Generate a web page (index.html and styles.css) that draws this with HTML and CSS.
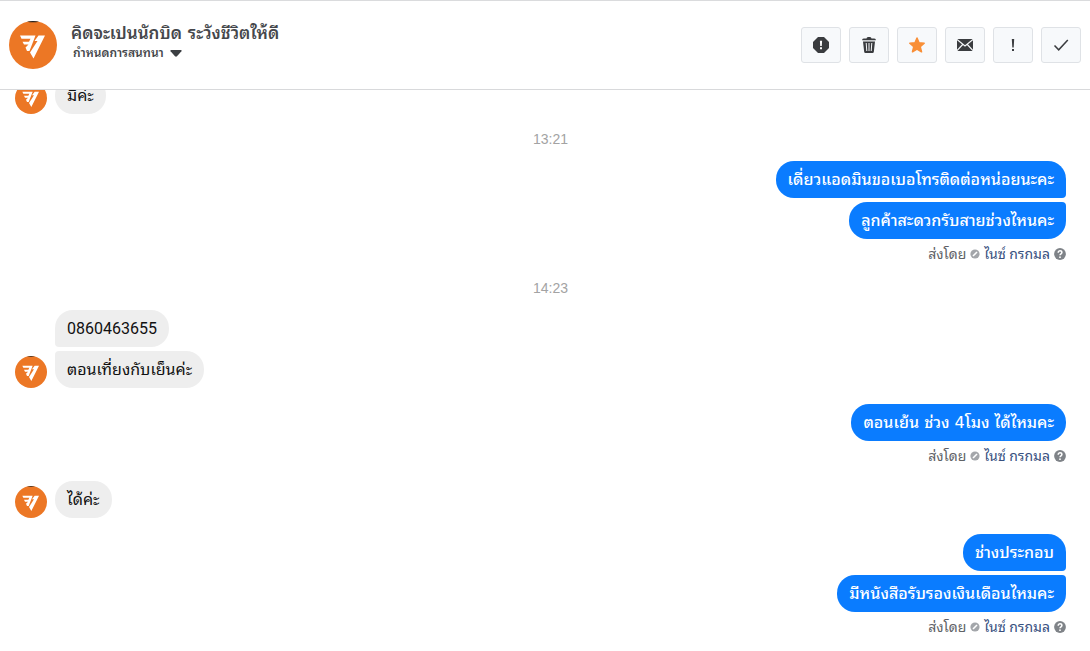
FILE: index.html
```html
<!DOCTYPE html>
<html lang="th">
<head>
<meta charset="utf-8">
<title>คิดจะเปนนักบิด ระวังชีวิตให้ดี</title>
<link rel="stylesheet" href="styles.css">
</head>
<body>
<svg class="defs" aria-hidden="true">
  <symbol id="logo" viewBox="0 0 48 48">
    <circle cx="24" cy="24" r="24" fill="#ec7725"/>
    <path d="M18 .8a24 24 0 0 1 12 0q-6 1-12 0z" fill="#222"/>
    <path fill="#fff" d="M11 14.500h15.500l-6 15.500h-2.500l-1.500-3.500 3-3h-4.500l-1.500-2.700h6.500l1.500-3h-9zM29.500 14.500H36L24.500 37.500 21 31.500l7.500-11.500h-3z"/>
  </symbol>
  <symbol id="pen" viewBox="0 0 10 10">
    <circle cx="5" cy="5" r="4.600" fill="#a3a6aa"/>
    <path d="M3 7l4-4" stroke="#fff" stroke-width="1.600"/>
  </symbol>
  <symbol id="help" viewBox="0 0 12 12">
    <circle cx="6" cy="6" r="5.900" fill="#7f8388"/>
    <path d="M4.200 4.700c0-2.600 3.700-2.400 3.700-.2C7.900 5.800 6 5.800 6 7.300" fill="none" stroke="#fff" stroke-width="1.500"/>
    <circle cx="6" cy="9.200" r=".9" fill="#fff"/>
  </symbol>
</svg>
<div class="app">
  <header class="header">
    <svg class="header-avatar"><use href="#logo"/></svg>
    <div class="heading">
      <h1 class="title">คิดจะเปนนักบิด ระวังชีวิตให้ดี</h1>
      <button class="assign" type="button">กำหนดการสนทนา
        <svg class="caret" viewBox="0 0 12 7"><path d="M1 0h10q1 .3.400 1.200L7 6.300q-1 .9-2 0L.6 1.200Q0 .3 1 0z" fill="#3c3f43"/></svg>
      </button>
    </div>
    <div class="actions">
      <button class="action" type="button" aria-label="สแปม"><svg viewBox="0 0 16 16"><path d="M5 0h6l5 5v6l-5 5H5l-5-5V5z" fill="#3a3c3f"/><path d="M6.900 3.700h2.200l-.3 5.300H7.200zM7 10.200h2v2H7z" fill="#fff"/></svg></button>
      <button class="action" type="button" aria-label="ลบ"><svg viewBox="0 0 16 16"><path d="M1.200 2.500Q1.500 1.500 3 1.500h2.500Q5.700 0 7 0h2q1.300 0 1.500 1.500H13q1.500 0 1.800 1v.8H1.200zM2 4.500h12L12.800 15q-.2 1-1.200 1H4.400q-1 0-1.200-1z" fill="#3a3c3f"/><path d="M5.200 6l.6 8M8 6v8M10.800 6l-.6 8" stroke="#f7f9fb" stroke-width="1"/></svg></button>
      <button class="action" type="button" aria-label="ติดดาว"><svg viewBox="0 0 16 16"><path d="M8 1l2 4.800 5.200.4-4 3.400 1.300 5.200L8 12l-4.500 2.800 1.300-5.200-4-3.400L6 5.800z" fill="#f98f37" stroke="#f98f37" stroke-width="1.500" stroke-linejoin="round"/></svg></button>
      <button class="action" type="button" aria-label="ทำเครื่องหมายว่ายังไม่ได้อ่าน"><svg viewBox="0 0 16 16"><rect y="2" width="16" height="12" rx="1" fill="#3a3c3f"/><path d="M0 2.500l8 6.500 8-6.500M0 13.500l5.700-6M16 13.500l-5.700-6" fill="none" stroke="#f7f9fb" stroke-width="1.200"/></svg></button>
      <button class="action" type="button" aria-label="ติดตามผล"><svg viewBox="0 0 16 16"><path d="M6.800 2h2.400l-.5 8.500H7.300zM7 12h2v2H7z" fill="#3a3c3f"/></svg></button>
      <button class="action" type="button" aria-label="เสร็จสิ้น"><svg viewBox="0 0 16 16"><path d="M1.500 8.500l4.200 4.300L14.800 3" fill="none" stroke="#3a3c3f" stroke-width="1.500"/></svg></button>
    </div>
  </header>
  <main class="thread">
    <section class="group incoming">
      <svg class="avatar"><use href="#logo"/></svg>
      <div class="bubbles"><p class="bubble">มีค่ะ</p></div>
    </section>
    <time class="time">13:21</time>
    <section class="group outgoing">
      <div class="bubbles">
        <p class="bubble">เดี่ยวแอดมินขอเบอโทรติดต่อหน่อยนะคะ</p>
        <p class="bubble">ลูกค้าสะดวกรับสายช่วงไหนคะ</p>
      </div>
      <div class="meta">ส่งโดย <svg class="pen"><use href="#pen"/></svg> <a class="sender" href="#">ไนซ์ กรกมล</a> <svg class="help"><use href="#help"/></svg></div>
    </section>
    <time class="time">14:23</time>
    <section class="group incoming">
      <svg class="avatar"><use href="#logo"/></svg>
      <div class="bubbles">
        <p class="bubble">0860463655</p>
        <p class="bubble">ตอนเที่ยงกับเย็นค่ะ</p>
      </div>
    </section>
    <section class="group outgoing">
      <div class="bubbles"><p class="bubble">ตอนเย้น ช่วง 4โมง ได้ไหมคะ</p></div>
      <div class="meta">ส่งโดย <svg class="pen"><use href="#pen"/></svg> <a class="sender" href="#">ไนซ์ กรกมล</a> <svg class="help"><use href="#help"/></svg></div>
    </section>
    <section class="group incoming">
      <svg class="avatar"><use href="#logo"/></svg>
      <div class="bubbles"><p class="bubble">ได้ค่ะ</p></div>
    </section>
    <section class="group outgoing">
      <div class="bubbles">
        <p class="bubble">ช่างประกอบ</p>
        <p class="bubble">มีหนังสือรับรองเงินเดือนไหมคะ</p>
      </div>
      <div class="meta">ส่งโดย <svg class="pen"><use href="#pen"/></svg> <a class="sender" href="#">ไนซ์ กรกมล</a> <svg class="help"><use href="#help"/></svg></div>
    </section>
  </main>
</div>
</body>
</html>
```
FILE: styles.css
```css
* { box-sizing: border-box; }
body {
  margin: 0;
  background: #fff;
  color: #111;
  font-family: Roboto, "Noto Sans Thai Looped", Loma, Waree, Tahoma, "Noto Sans", sans-serif;
}
.defs { display: none; }
.app {
  display: flex;
  flex-direction: column;
  height: 100vh;
  border-top: 1px solid #dadbdd;
}
.header {
  display: flex;
  align-items: center;
  flex: none;
  padding: 20px 9px;
  border-bottom: 1px solid #d8d9db;
}
.header-avatar { width: 48px; height: 48px; }
.heading {
  display: flex;
  flex-direction: column;
  align-items: flex-start;
  flex: 1;
  padding: 0 0 6px 14px;
}
.title {
  margin: 0;
  font-family: "DejaVu Sans", "Noto Sans Thai Looped", Loma, Waree, sans-serif;
  font-size: 17px;
  line-height: 22px;
  font-weight: 600;
  color: #45474b;
}
.assign {
  display: flex;
  align-items: center;
  gap: 6px;
  padding: 0 2px;
  border: 0;
  background: none;
  color: #45474b;
  font-family: inherit;
  font-size: 12px;
  line-height: 18px;
  font-weight: 600;
}
.caret { width: 12px; height: 7px; }
.actions { display: flex; gap: 8px; }
.action {
  display: grid;
  place-items: center;
  width: 40px;
  height: 36px;
  padding: 0;
  border: 1px solid #dfe2e6;
  border-radius: 3px;
  background: #f7f9fb;
}
.action svg { width: 16px; height: 16px; }
.thread {
  display: flex;
  flex-direction: column;
  justify-content: flex-end;
  flex: 1;
  min-height: 0;
  overflow: hidden;
  padding: 0 24px 15px 15px;
}
.group + .group { margin-top: 16px; }
.incoming {
  display: flex;
  align-items: flex-end;
  gap: 8px;
}
.avatar { width: 32px; height: 32px; }
.bubbles {
  display: flex;
  flex-direction: column;
  align-items: flex-start;
  gap: 4px;
}
.bubble {
  margin: 0;
  padding: 8px 12px;
  border-radius: 18px;
  background: #eee;
  font-size: 16px;
  line-height: 21px;
  white-space: nowrap;
}
.incoming .bubble:not(:last-child) { border-bottom-left-radius: 4px; }
.incoming .bubble:not(:first-child) { border-top-left-radius: 4px; }
.outgoing .bubbles { align-items: flex-end; }
.outgoing .bubble {
  background: #0a7cff;
  color: #fff;
  font-family: "DejaVu Sans", "Noto Sans Thai Looped", Loma, Waree, sans-serif;
  font-weight: 500;
}
.outgoing .bubble:not(:last-child) { border-bottom-right-radius: 4px; }
.outgoing .bubble:not(:first-child) { border-top-right-radius: 4px; }
.time {
  padding: 17px 0 14px 20px;
  color: #a3a3a3;
  font-family: "Liberation Sans", Arial, sans-serif;
  font-size: 14px;
  line-height: 16px;
  text-align: center;
}
.meta {
  display: flex;
  align-items: center;
  justify-content: flex-end;
  gap: 4px;
  height: 24px;
  padding-top: 6px;
  color: #606266;
  font-size: 14px;
  line-height: 18px;
}
.pen { width: 10px; height: 10px; }
.help { width: 12px; height: 12px; }
.sender { color: #385080; text-decoration: none; }
```
